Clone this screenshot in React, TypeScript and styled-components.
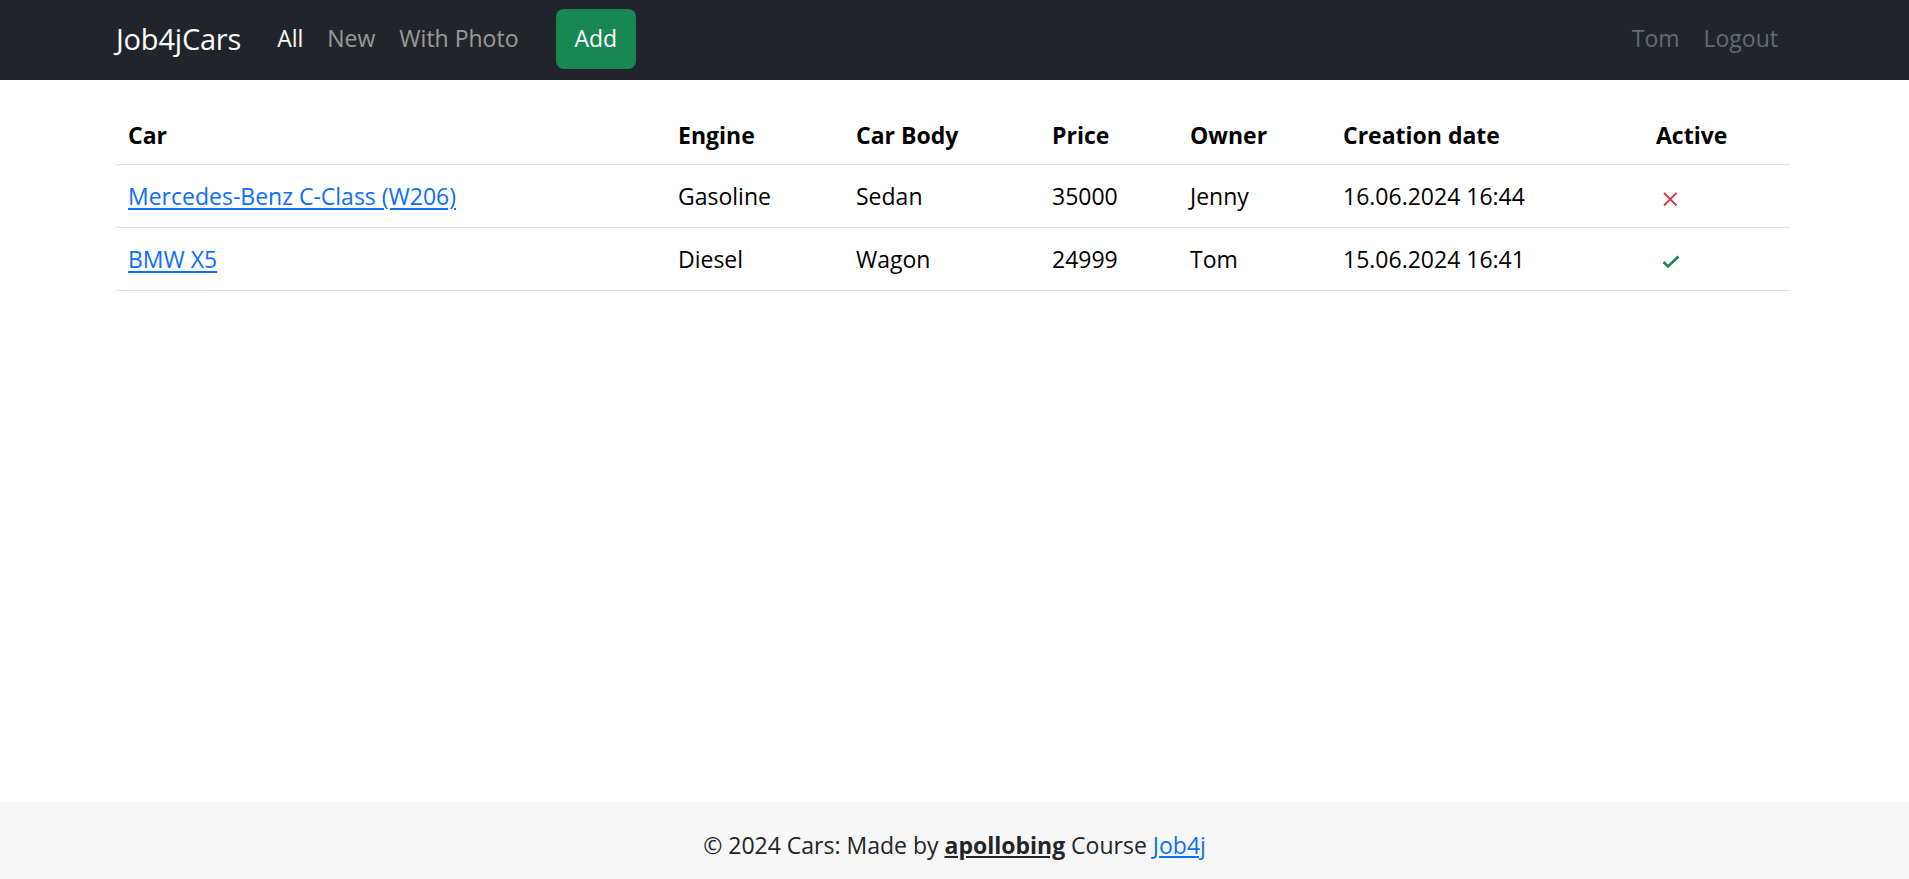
import React from "react";
import styled, { createGlobalStyle } from "styled-components";

const GlobalStyle = createGlobalStyle`
  html, body { margin: 0; padding: 0; }
  body {
    font-family: "Open Sans", "Noto Sans", sans-serif;
    font-size: 23px;
    line-height: 1.5;
    color: #212529;
    background: #fff;
  }
  * { box-sizing: border-box; }
`;

const Page = styled.div`
  min-height: 100vh;
  display: flex;
  flex-direction: column;
`;

const NavBar = styled.header`
  background: #212529;
  height: 80px;
  padding-bottom: 3px;
  display: flex;
  align-items: center;
`;

const Container = styled.div`
  width: 1674px;
  margin-left: 116px;
`;

const NavInner = styled(Container)`
  display: flex;
  align-items: center;
`;

const Brand = styled.a`
  color: #fff;
  font-size: 29px;
  text-decoration: none;
  margin-right: 24px;
  line-height: 1.5;
  letter-spacing: -0.2px;
`;

const NavList = styled.nav`
  display: flex;
  align-items: center;
`;

const NavLink = styled.a<{ $active?: boolean; $muted?: boolean }>`
  padding: 8px 12px;
  text-decoration: none;
  color: ${(p) =>
    p.$active ? "#ffffff" : p.$muted ? "#646b72" : "rgba(255,255,255,0.55)"};
`;

const AddButton = styled.button`
  margin-left: 25px;
  height: 60px;
  padding: 0 19px;
  border: none;
  border-radius: 8px;
  background: #198754;
  color: #fff;
  font-family: inherit;
  font-size: 23px;
  line-height: 1.5;
  cursor: pointer;
`;

const Spacer = styled.div`
  flex: 1;
`;

const Main = styled.main`
  flex: 1;
`;

const Table = styled(Container).attrs({ as: "table" })`
  margin-top: 22px;
  border-collapse: collapse;
  table-layout: fixed;
  color: #000;
`;

const Th = styled.th`
  text-align: left;
  font-weight: 700;
  padding: 15px 12px 11px;
  border-bottom: 1px solid #dee2e6;
  line-height: 36px;
`;

const Td = styled.td`
  padding: 13px 12px;
  border-bottom: 1px solid #dee2e6;
  line-height: 36px;
  white-space: nowrap;
`;

const CarLink = styled.a`
  color: #0d6efd;
  text-decoration: underline;
  text-underline-offset: 3px;
`;

const IconWrap = styled.span`
  display: inline-flex;
  align-items: center;
  vertical-align: middle;
  padding-left: 6px;
`;

const Footer = styled.footer`
  background: #f7f7f7;
  height: 77px;
  padding-top: 9px;
  display: flex;
  align-items: center;
  justify-content: center;
  color: #212529;
`;

const Author = styled.a`
  color: #212529;
  font-weight: 700;
  text-decoration: underline;
`;

const CourseLink = styled.a`
  color: #0d6efd;
  text-decoration: underline;
`;

const CrossIcon = () => (
  <svg width="16" height="16" viewBox="0 0 16 16">
    <path d="M2 2 L14.5 14.5 M14.5 2 L2 14.5" stroke="#dc3545" strokeWidth="1.8" fill="none" />
  </svg>
);

const CheckIcon = () => (
  <svg width="18" height="16" viewBox="0 0 18 16">
    <path d="M1.5 8 L6 12.5 L16.5 2.5" stroke="#198754" strokeWidth="2.6" fill="none" />
  </svg>
);

type Car = {
  name: string;
  engine: string;
  body: string;
  price: number;
  owner: string;
  created: string;
  active: boolean;
};

const cars: Car[] = [
  {
    name: "Mercedes-Benz C-Class (W206)",
    engine: "Gasoline",
    body: "Sedan",
    price: 35000,
    owner: "Jenny",
    created: "16.06.2024 16:44",
    active: false,
  },
  {
    name: "BMW X5",
    engine: "Diesel",
    body: "Wagon",
    price: 24999,
    owner: "Tom",
    created: "15.06.2024 16:41",
    active: true,
  },
];

const colWidths = [550, 178, 196, 138, 153, 313, 146];

export default function App() {
  return (
    <>
      <GlobalStyle />
      <Page>
        <NavBar>
          <NavInner>
            <Brand href="#">Job4jCars</Brand>
            <NavList>
              <NavLink href="#" $active>All</NavLink>
              <NavLink href="#">New</NavLink>
              <NavLink href="#">With Photo</NavLink>
            </NavList>
            <AddButton>Add</AddButton>
            <Spacer />
            <NavList>
              <NavLink href="#" $muted>Tom</NavLink>
              <NavLink href="#" $muted>Logout</NavLink>
            </NavList>
          </NavInner>
        </NavBar>
        <Main>
          <Table>
            <colgroup>
              {colWidths.map((w, i) => (
                <col key={i} style={{ width: w }} />
              ))}
            </colgroup>
            <thead>
              <tr>
                <Th>Car</Th>
                <Th>Engine</Th>
                <Th>Car Body</Th>
                <Th>Price</Th>
                <Th>Owner</Th>
                <Th>Creation date</Th>
                <Th>Active</Th>
              </tr>
            </thead>
            <tbody>
              {cars.map((c) => (
                <tr key={c.name}>
                  <Td>
                    <CarLink href="#">{c.name}</CarLink>
                  </Td>
                  <Td>{c.engine}</Td>
                  <Td>{c.body}</Td>
                  <Td>{c.price}</Td>
                  <Td>{c.owner}</Td>
                  <Td>{c.created}</Td>
                  <Td>
                    <IconWrap>{c.active ? <CheckIcon /> : <CrossIcon />}</IconWrap>
                  </Td>
                </tr>
              ))}
            </tbody>
          </Table>
        </Main>
        <Footer>
          <span>
            © 2024 Cars: Made by <Author href="#">apollobing</Author> Course{" "}
            <CourseLink href="#">Job4j</CourseLink>
          </span>
        </Footer>
      </Page>
    </>
  );
}
